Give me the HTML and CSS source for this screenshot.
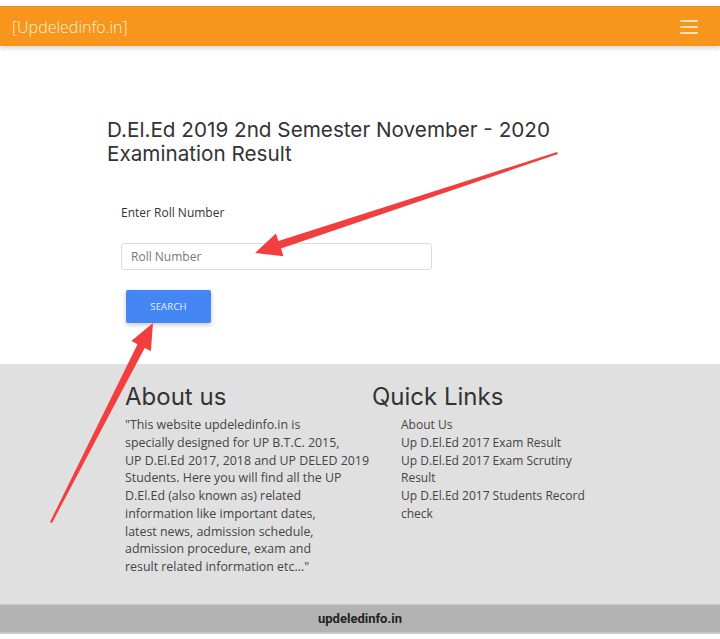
FILE: index.html
```html
<!DOCTYPE html>
<html lang="en">
<head>
<meta charset="utf-8">
<title>Updeledinfo.in - D.El.Ed Result</title>
<link rel="stylesheet" href="styles.css">
</head>
<body>
<header class="nav">
  <a class="brand" href="#">[Updeledinfo.in]</a>
  <span class="burger"><i></i><i></i><i></i></span>
</header>

<main class="main">
  <h1 class="title">D.El.Ed 2019 2nd Semester November - 2020 Examination Result</h1>
  <form class="form">
    <label class="label" for="roll">Enter Roll Number</label>
    <input class="input" id="roll" type="text" placeholder="Roll Number">
    <button class="btn" type="button">SEARCH</button>
  </form>
</main>

<footer class="footer">
  <div class="cols">
    <section class="about">
      <h2 class="fhead">About us</h2>
      <p class="ftext">"This website updeledinfo.in is<br>specially designed for UP B.T.C. 2015,<br>UP D.El.Ed 2017, 2018 and UP DELED 2019<br>Students. Here you will find all the UP<br>D.El.Ed (also known as) related<br>information like important dates,<br>latest news, admission schedule,<br>admission procedure, exam and<br>result related information etc..."</p>
    </section>
    <section class="links">
      <h2 class="fhead">Quick Links</h2>
      <ul class="list">
        <li>About Us</li>
        <li>Up D.El.Ed 2017 Exam Result</li>
        <li>Up D.El.Ed 2017 Exam Scrutiny Result</li>
        <li>Up D.El.Ed 2017 Students Record check</li>
      </ul>
    </section>
  </div>
</footer>
<div class="copy">updeledinfo.in</div>

<svg class="arrows" width="720" height="639" viewBox="0 0 720 639" aria-hidden="true">
  <polygon fill="#f23e3e" points="557,152 558,154 281.0,248.6 283.5,256.2 255,253 275.9,233.4 278.4,241.0"/>
  <polygon fill="#f23e3e" points="50,522 52,523 144.7,347.9 150.9,351.1 153,323 131.3,341.1 137.5,344.3"/>
</svg>
</body>
</html>
```

FILE: styles.css
```css
* { box-sizing: border-box; }
html, body { margin: 0; padding: 0; background: #fff; }
body {
  position: relative;
  width: 720px;
  min-height: 639px;
  font-family: "Open Sans", "Liberation Sans", sans-serif;
  color: #333;
}

.nav {
  margin-top: 6px;
  height: 40px;
  background: #f7951d;
  border-top: 1px solid #e88d1f;
  display: flex;
  align-items: center;
  justify-content: space-between;
  padding: 0 22px 0 12px;
  box-shadow: 0 2px 5px rgba(0,0,0,0.18);
}
.brand {
  font-family: "Open Sans", sans-serif;
  font-weight: 300;
  font-size: 16px;
  color: #fff0d2;
  text-decoration: none;
}
.burger {
  display: flex;
  flex-direction: column;
  gap: 4px;
  width: 18px;
}
.burger i {
  display: block;
  height: 2px;
  background: #fde3b8;
  border-radius: 1px;
}

.main {
  padding: 0 107px;
}
.title {
  margin: 72px 0 0;
  font-family: "Inter", "Open Sans", sans-serif;
  font-weight: 400;
  font-size: 20.7px;
  line-height: 24px;
  color: #333;
}
.form {
  display: flex;
  flex-direction: column;
  align-items: flex-start;
  padding-left: 14px;
  padding-bottom: 41px;
}
.label {
  margin-top: 38px;
  font-size: 12px;
  line-height: 18px;
  color: #333;
}
.input {
  margin-top: 21px;
  width: 311px;
  height: 27px;
  border: 1px solid #dcdcdc;
  border-radius: 3px;
  padding: 0 9px;
  font-family: "Open Sans", sans-serif;
  font-size: 12px;
  color: #333;
}
.input::placeholder { color: #777; }
.btn {
  margin: 20px 0 0 5px;
  width: 85px;
  height: 33px;
  border: 0;
  border-radius: 2px;
  background: #4486f3;
  color: #e9f0ff;
  font-family: "Open Sans", sans-serif;
  font-size: 9.5px;
  letter-spacing: 0.2px;
  box-shadow: 0 2px 5px rgba(0,0,0,0.22);
}

.footer {
  background: #e0e0e0;
  height: 240px;
  padding: 18px 0 0 125px;
}
.cols {
  display: flex;
}
.about { width: 240px; margin-right: 7px; }
.links { width: 230px; }
.fhead {
  margin: 0;
  font-family: "Inter", "Open Sans", sans-serif;
  font-weight: 400;
  font-size: 24px;
  line-height: 30px;
  color: #333;
}
.ftext {
  margin: 4px 0 0;
  font-size: 12.4px;
  line-height: 17.75px;
  white-space: nowrap;
  color: #444;
}
.list {
  list-style: none;
  margin: 4px 0 0;
  padding: 0 0 0 29px;
  font-size: 12px;
  line-height: 17.75px;
  color: #444;
}

.copy {
  height: 30px;
  background: #b3b3b3;
  border-top: 1px solid #c9c9c9;
  border-bottom: 2px solid #c9c9c9;
  text-align: center;
  font-family: "Roboto", sans-serif;
  font-weight: 700;
  font-size: 13px;
  line-height: 27px;
  color: #222;
}

.arrows {
  position: absolute;
  left: 0;
  top: 0;
  pointer-events: none;
}
```
